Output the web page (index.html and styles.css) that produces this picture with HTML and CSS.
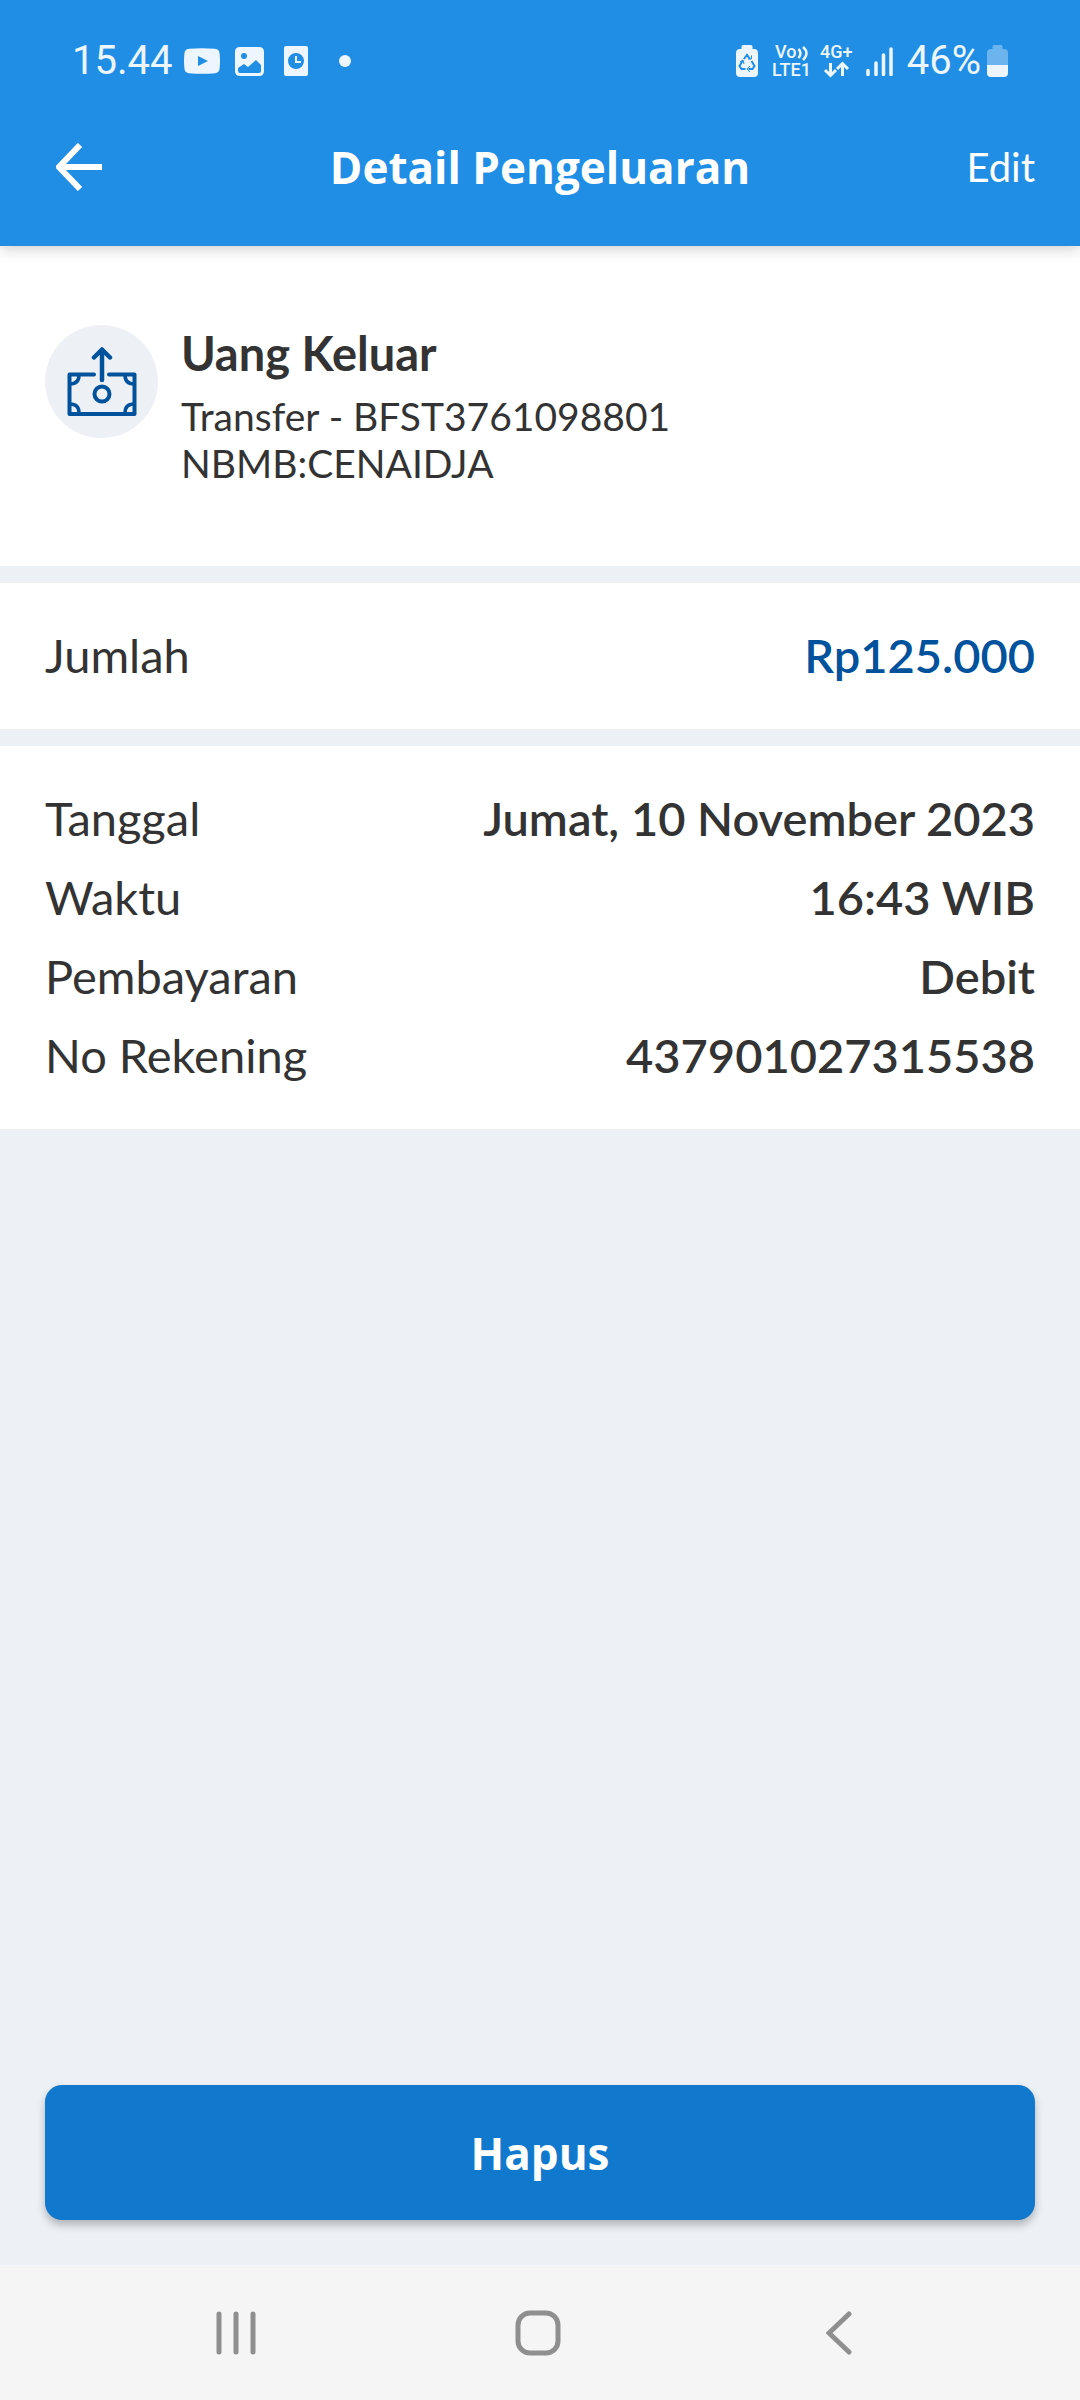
FILE: index.html
```html
<!DOCTYPE html>
<html lang="id">
<head>
<meta charset="utf-8">
<meta name="viewport" content="width=device-width, initial-scale=1">
<title>Detail Pengeluaran</title>
<link rel="stylesheet" href="styles.css">
</head>
<body>
<div class="screen">
  <header class="top">
    <div class="status">
      <div class="status-left">
        <span class="clock">15.44</span>
        <svg class="ic-video" width="36" height="26" viewBox="0 0 36 26"><path fill="currentColor" fill-rule="evenodd" d="M5 .8Q18-.5 31 .8 35 1.200 35.500 5 36.500 13 35.500 21 35 24.800 31 25.200 18 26.500 5 25.200 1 24.800.5 21-.5 13 .5 5 1 1.200 5 .8ZM14 8v10l10-5Z"/></svg>
        <svg class="ic-photo" width="29" height="29" viewBox="0 0 29 29"><path fill="currentColor" fill-rule="evenodd" d="M5 0h19q5 0 5 5v19q0 5-5 5H5q-5 0-5-5V5Q0 0 5 0ZM9 6a3 3 0 1 0 0 6 3 3 0 0 0 0-6ZM3 21v3q0 2 2 2h19q2 0 2-2v-6l-5-5-8 7-4-3Z"/></svg>
        <svg class="ic-clock" width="24" height="30" viewBox="0 0 24 30"><path fill="currentColor" fill-rule="evenodd" d="M2 0h20q2 0 2 2v26q0 2-2 2H2q-2 0-2-2V2Q0 0 2 0ZM12 7a8 8 0 1 0 0 16 8 8 0 0 0 0-16Z"/><path d="M12 10v6h5" fill="none" stroke="currentColor" stroke-width="2"/></svg>
        <svg class="ic-dot" width="12" height="12" viewBox="0 0 12 12"><circle cx="6" cy="6" r="6" fill="currentColor"/></svg>
      </div>
      <div class="status-right">
        <svg width="22" height="32" viewBox="0 0 22 32"><path fill="currentColor" d="M7 0h8q1.500 0 1.500 1.500V4H18q4 0 4 4v20q0 4-4 4H4q-4 0-4-4V8q0-4 4-4h1.500V1.500Q5.500 0 7 0Z"/><path d="m8 14 3-4 3 4M15.500 16l3 5-2 3h-4M9.500 24h-4l-2-3 3-5" fill="none" stroke="#208ee5" stroke-width="2"/><path d="m14 21-3 3 3 3M4 17l3-2 1 4M12 14h3.500v-3.500" fill="none" stroke="#208ee5" stroke-width="1"/></svg>
        <svg class="ic-volte" width="42" height="44" viewBox="0 -6 42 44"><text class="tiny" x="3" y="13">Vo</text><text class="tiny" x="0" y="31">LTE1</text><path d="M26.500 4q4 4 0 9M31 2q7 6 0 13" fill="none" stroke="currentColor" stroke-width="2.500"/></svg>
        <svg class="ic-net" width="36" height="44" viewBox="0 -6 36 44"><text class="tiny" x="1" y="13">4G+</text><path d="M11.500 18v12M6 25l5.500 5.500L17 25M23.500 31V19M18 24l5.500-5.500L29 24" fill="none" stroke="currentColor" stroke-width="3"/></svg>
        <svg class="ic-signal" width="27" height="29" viewBox="0 0 27 29"><path d="M2 23.500v4M10 16v11.500M17.500 8v19.500M25 2v25.500" stroke="currentColor" stroke-width="3.500" stroke-linecap="round"/></svg>
        <span class="percent">46%</span>
        <svg class="ic-battery" width="21" height="32" viewBox="0 0 21 32"><path fill="#6bb4ee" d="M7 0h7q1.500 0 1.500 1.500V4H17q4 0 4 4v12H0V8q0-4 4-4h1.500V1.500Q5.500 0 7 0Z"/><path fill="currentColor" d="M0 20h21v8q0 4-4 4H4q-4 0-4-4Z"/></svg>
      </div>
    </div>
    <div class="bar">
      <a class="back" href="#" aria-label="Kembali"><svg width="46" height="48" viewBox="0 0 46 48"><path d="M24 2 3 24l21 22M3 24h43" fill="none" stroke="currentColor" stroke-width="6"/></svg></a>
      <h1 class="title">Detail Pengeluaran</h1>
      <a class="edit" href="#">Edit</a>
    </div>
  </header>
  <main class="content">
    <section class="card summary">
      <span class="badge"><svg width="70" height="70" viewBox="0 0 70 70" fill="none" stroke="#00529c" stroke-width="4" stroke-linecap="round" stroke-linejoin="round"><path d="M27 27.500H2.500V67h65V27.500H42"/><path d="M35 33V3M27 10.500l8-8 8 8" stroke-width="4.500"/><circle cx="35" cy="47" r="7.500"/><path d="M12 28q0 9-9 9M58 28q0 9 9 9M12 66q0-9-9-9M58 66q0-9 9-9" stroke-width="3.500"/></svg></span>
      <div>
        <h2 class="name">Uang Keluar</h2>
        <p class="note">Transfer - BFST3761098801<br>NBMB:CENAIDJA</p>
      </div>
    </section>
    <dl class="card rows">
      <div class="row"><dt>Jumlah</dt><dd class="amount">Rp125.000</dd></div>
    </dl>
    <dl class="card rows">
      <div class="row"><dt>Tanggal</dt><dd>Jumat, 10 November 2023</dd></div>
      <div class="row"><dt>Waktu</dt><dd>16:43 WIB</dd></div>
      <div class="row"><dt>Pembayaran</dt><dd>Debit</dd></div>
      <div class="row"><dt>No Rekening</dt><dd>437901027315538</dd></div>
    </dl>
  </main>
  <div class="action"><button class="delete" type="button">Hapus</button></div>
  <nav class="nav">
    <button type="button" aria-label="Aplikasi terbaru"><svg width="40" height="44" viewBox="0 0 40 44"><path d="M3 3v38M20 3v38M37 3v38" stroke="currentColor" stroke-width="5" stroke-linecap="round"/></svg></button>
    <button type="button" aria-label="Beranda"><svg width="46" height="46" viewBox="0 0 46 46"><rect x="3" y="3" width="40" height="40" rx="12" fill="none" stroke="currentColor" stroke-width="5"/></svg></button>
    <button type="button" aria-label="Kembali"><svg width="26" height="44" viewBox="0 0 26 44"><path d="M23 3 3 22l20 19" fill="none" stroke="currentColor" stroke-width="5" stroke-linecap="round"/></svg></button>
  </nav>
</div>
</body>
</html>
```
FILE: styles.css
```css
* { box-sizing: border-box; }
body, h1, h2, p, dl, dd { margin: 0; }
body {
  font-family: Lato, "Open Sans", sans-serif;
  font-size: 47px;
  color: #333;
  background: #edf1f6;
}
svg { display: block; flex: none; }
a { color: inherit; text-decoration: none; }
button { border: 0; padding: 0; font: inherit; cursor: pointer; }

.screen { min-height: 100vh; display: flex; flex-direction: column; }

.top {
  position: relative;
  background: #208ee5;
  color: #fff;
  box-shadow: 0 2px 14px rgba(0, 0, 0, .22);
}
.status {
  display: flex;
  justify-content: space-between;
  align-items: center;
  height: 120px;
  padding: 2px 72px 0;
  font: 40px/48px Roboto, sans-serif;
  color: #edf6fe;
}
.status-left, .status-right { display: flex; align-items: center; }
.ic-video { margin-left: 12px; }
.ic-photo { margin-left: 15px; }
.ic-clock { margin-left: 20px; }
.ic-dot { margin-left: 31px; }
.ic-volte { margin-left: 14px; }
.ic-net { margin-left: 5px; }
.ic-signal { margin-left: 11px; }
.percent { margin-left: 14px; }
.ic-battery { margin-left: 6px; }
.tiny { font: 500 18px Roboto, sans-serif; fill: currentColor; }

.bar {
  display: grid;
  grid-template-columns: 1fr auto 1fr;
  align-items: center;
  height: 126px;
  padding: 0 45px 32px;
}
.back { justify-self: start; padding-left: 11px; }
.title, .delete { font-family: "Open Sans", Lato, sans-serif; font-size: 44px; font-weight: 700; }
.title { line-height: 56px; }
.edit { justify-self: end; font-size: 40px; line-height: 48px; }

.content { display: grid; gap: 17px; }
.card { background: #fff; }
.summary { display: flex; gap: 23px; padding: 79px 45px; }
.badge {
  flex: none;
  width: 113px;
  height: 113px;
  display: grid;
  place-items: center;
  border-radius: 50%;
  background: #edf1f6;
}
.name { font-size: 47px; font-weight: 700; line-height: 56px; margin-bottom: 12px; }
.note { font-size: 39px; line-height: 47px; }

.rows { display: grid; gap: 23px; padding: 44px 45px 46px; }
.row { display: flex; justify-content: space-between; line-height: 56px; }
.row dd { font-weight: 600; text-align: right; }
.row .amount { color: #00529c; }

.action { margin-top: auto; padding: 45px; }
.delete {
  display: block;
  width: 100%;
  height: 135px;
  border-radius: 17px;
  background: #1078cd;
  color: #fff;
  box-shadow: 0 5px 8px rgba(0, 0, 0, .26);
}

.nav {
  display: flex;
  justify-content: space-around;
  height: 135px;
  padding: 0 90px 0 85px;
  background: #f5f5f5;
}
.nav button {
  flex: 1;
  display: grid;
  place-items: center;
  background: none;
  color: #8f8f8f;
}
```
